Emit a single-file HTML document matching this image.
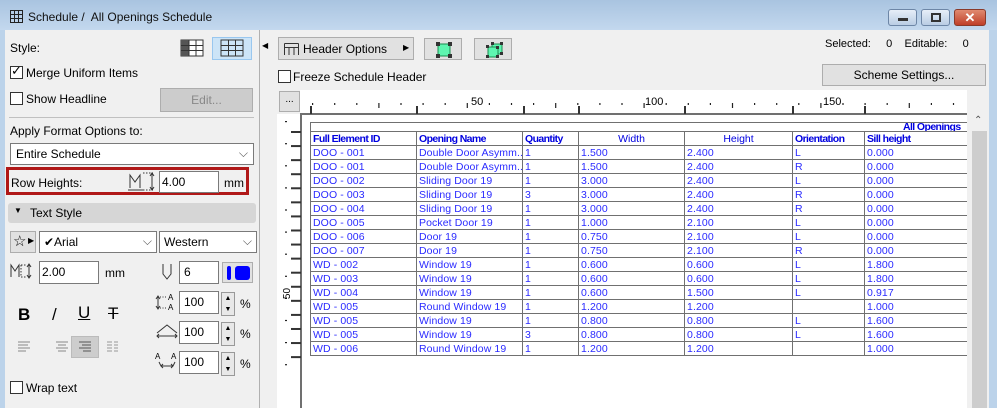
<!DOCTYPE html>
<html><head><meta charset="utf-8"><style>
*{margin:0;padding:0;box-sizing:border-box}
body{width:997px;height:408px;overflow:hidden;background:#bcd3ea;font-family:"Liberation Sans",sans-serif;font-size:12px;color:#000;position:relative}
.a{position:absolute}
.box{position:absolute;background:#fff;border:1px solid #7a7a7a}
.btn{position:absolute;background:#e1e1e1;border:1px solid #adadad}
.cb{position:absolute;width:13px;height:13px;border:1px solid #333;background:#fff}
.t{position:absolute;white-space:nowrap}
table{border-collapse:collapse;font-size:10.5px;color:#2a2aff;letter-spacing:0.1px}
td{border:1px solid #707070;height:14px;padding:0 2px;line-height:12px;white-space:nowrap;overflow:hidden}
tr.h td{font-weight:bold;letter-spacing:-0.6px;color:#0000e0}
.sp{position:absolute;width:14px;height:24px;border:1px solid #999;background:#e8e8e8;font-size:7px;text-align:center;line-height:11px}
</style></head><body>
<div class="a" style="left:0;top:0;width:997px;height:30px;background:linear-gradient(#a9c4e0,#c3d8ee)"></div>
<svg class="a" style="left:10px;top:10px" width="13" height="13"><rect x="0.5" y="0.5" width="12" height="12" fill="none" stroke="#222"/><path d="M0 4.5H13M0 8.5H13M4.5 0V13M8.5 0V13" stroke="#222"/></svg>
<div class="t" style="left:28px;top:10px;font-size:12px;color:#111">Schedule /&nbsp; All Openings Schedule</div>
<div class="a" style="left:888px;top:9px;width:29px;height:17px;border:1px solid #6d86a6;border-radius:3px;background:linear-gradient(#e6eef8,#b9cde4)"><div class="a" style="left:9px;top:8px;width:10px;height:3px;background:#333"></div></div>
<div class="a" style="left:921px;top:9px;width:29px;height:17px;border:1px solid #6d86a6;border-radius:3px;background:linear-gradient(#e6eef8,#b9cde4)"><div class="a" style="left:9px;top:3px;width:10px;height:9px;border:2px solid #333"></div></div>
<div class="a" style="left:954px;top:9px;width:32px;height:17px;border:1px solid #8a3a2a;border-radius:3px;background:linear-gradient(#e08a70,#c0402a);color:#fff;font-weight:bold;text-align:center;line-height:15px;font-size:13px">✕</div>

<div class="a" style="left:5px;top:30px;width:254px;height:378px;background:#f0f0f0"></div>
<div class="a" style="left:259px;top:30px;width:1px;height:378px;background:#b0b0b0"></div>
<div class="a" style="left:260px;top:30px;width:729px;height:378px;background:#f0f0f0"></div>
<div class="t" style="left:10px;top:41px">Style:</div>
<svg class="a" style="left:180px;top:39px" width="24" height="18"><rect x="1" y="1" width="22" height="16" fill="#fff" stroke="#333"/><rect x="1" y="1" width="8" height="16" fill="#555"/><path d="M1 6.5H23M1 11.5H23M9 1V17M16 1V17" stroke="#333"/></svg>
<div class="a" style="left:212px;top:37px;width:40px;height:23px;background:#cce4f7;border:1px solid #99c7ef"></div>
<svg class="a" style="left:220px;top:39px" width="24" height="18"><rect x="1" y="1" width="22" height="16" fill="none" stroke="#333"/><path d="M1 6.5H23M1 11.5H23M8.5 1V17M15.5 1V17" stroke="#333"/></svg>
<div class="cb" style="left:10px;top:66px"></div><div class="t" style="left:11px;top:63px;font-size:13px">✓</div>
<div class="t" style="left:26px;top:66px">Merge Uniform Items</div>
<div class="cb" style="left:10px;top:92px"></div>
<div class="t" style="left:26px;top:92px">Show Headline</div>
<div class="btn" style="left:160px;top:88px;width:93px;height:24px;background:#ccc;color:#888;text-align:center;line-height:22px">Edit...</div>
<div class="a" style="left:9px;top:117px;width:245px;height:1px;background:#c0c0c0"></div>
<div class="t" style="left:10px;top:124px">Apply Format Options to:</div>
<div class="box" style="left:10px;top:143px;width:244px;height:22px"><span class="t" style="left:5px;top:3px">Entire Schedule</span><span class="t" style="right:5px;top:2px;color:#555">⌵</span></div>
<div class="a" style="left:6px;top:167px;width:243px;height:28px;border:3px solid #b01818"></div>
<div class="t" style="left:11px;top:176px">Row Heights:</div>
<svg class="a" style="left:128px;top:172px" width="30" height="20"><path d="M2 16V3L7 10L12 3V16M0 18H16" stroke="#333" fill="none"/><path d="M15 1H25M15 18H25" stroke="#333" stroke-dasharray="1.5 1.5"/><path d="M24 2V17M22 4L24 1L26 4M22 15L24 18L26 15" stroke="#333" fill="none"/></svg>
<div class="box" style="left:159px;top:171px;width:60px;height:22px"><span class="t" style="left:2px;top:3px">4.00</span></div>
<div class="t" style="left:224px;top:176px">mm</div>
<div class="a" style="left:8px;top:203px;width:248px;height:20px;background:#d6d6d6;border-radius:3px"></div>
<div class="t" style="left:14px;top:206px;font-size:8px">▼</div>
<div class="t" style="left:30px;top:206px">Text Style</div>
<div class="btn" style="left:10px;top:231px;width:26px;height:22px"><span class="t" style="left:2px;top:0px;font-size:15px">☆</span><span class="t" style="left:17px;top:4px;font-size:8px">▶</span></div>
<div class="box" style="left:39px;top:231px;width:118px;height:22px"><span class="t" style="left:4px;top:3px">✔Arial</span><span class="t" style="right:4px;top:2px;color:#555">⌵</span></div>
<div class="box" style="left:159px;top:231px;width:98px;height:22px"><span class="t" style="left:4px;top:3px">Western</span><span class="t" style="right:4px;top:2px;color:#555">⌵</span></div>
<svg class="a" style="left:10px;top:263px" width="24" height="16"><path d="M1 14V2L5 8L9 2V14" stroke="#333" fill="none"/><path d="M11 2H17M11 14H17M11 2V14" stroke="#333" stroke-dasharray="1.5 1.5" fill="none"/><path d="M19 2V14M17 4L19 1L21 4M17 12L19 15L21 12" stroke="#333" fill="none"/></svg>
<div class="box" style="left:39px;top:261px;width:60px;height:23px"><span class="t" style="left:2px;top:3px">2.00</span></div>
<div class="t" style="left:105px;top:266px">mm</div>
<svg class="a" style="left:161px;top:263px" width="12" height="18"><path d="M2 1V11L6 16L10 11V1" stroke="#333" fill="none"/></svg>
<div class="box" style="left:179px;top:261px;width:40px;height:23px"><span class="t" style="left:4px;top:3px">6</span></div>
<div class="btn" style="left:222px;top:262px;width:31px;height:21px"><div class="a" style="left:4px;top:3px;width:4px;height:14px;background:#0000ff;border-radius:2px"></div><div class="a" style="left:12px;top:3px;width:15px;height:14px;background:#0000ff;border-radius:3px"></div></div>
<div class="t" style="left:18px;top:305px;font-size:17px;font-weight:bold">B</div>
<div class="t" style="left:52px;top:305px;font-size:17px">/</div>
<div class="t" style="left:78px;top:303px;font-size:17px;text-decoration:underline">U</div>
<div class="t" style="left:108px;top:304px;font-size:17px;text-decoration:line-through">T</div>
<svg class="a" style="left:16px;top:340px" width="110" height="14"><g stroke="#888"><path d="M2 2H14M2 5H12M2 8H14M2 11H10"/><path d="M40 2H52M42 5H50M40 8H52M42 11H50"/></g></svg>
<div class="a" style="left:71px;top:336px;width:28px;height:22px;background:#cdcdcd;border:1px solid #bbb"></div>
<svg class="a" style="left:78px;top:340px" width="40" height="14"><g stroke="#555"><path d="M1 2H13M4 5H13M1 8H13M5 11H13"/></g><g stroke="#999"><path d="M29 2H34M29 5H34M29 8H34M29 11H34M36 2H40M36 5H40M36 8H40M36 11H40"/></g></svg>
<svg class="a" style="left:155px;top:292px" width="24" height="20"><text x="13" y="8" font-size="8" font-family="Liberation Sans">A</text><text x="13" y="18" font-size="8" font-family="Liberation Sans">A</text><path d="M3 5V16M1 7L3 4L5 7M1 14L3 17L5 14" stroke="#333" fill="none"/><path d="M5 5H12M5 16H12" stroke="#333" stroke-dasharray="1 1.5"/></svg>
<div class="box" style="left:179px;top:291px;width:40px;height:23px"><span class="t" style="left:4px;top:3px">100</span></div>
<div class="sp" style="left:221px;top:292px">▲<br>▼</div><div class="t" style="left:240px;top:297px">%</div>
<svg class="a" style="left:156px;top:323px" width="22" height="16"><path d="M1 10L11 2L21 10M1 13H21M3 11L1 13L3 15M19 11L21 13L19 15" stroke="#333" fill="none"/></svg>
<div class="box" style="left:179px;top:321px;width:40px;height:23px"><span class="t" style="left:4px;top:3px">100</span></div>
<div class="sp" style="left:221px;top:322px">▲<br>▼</div><div class="t" style="left:240px;top:327px">%</div>
<svg class="a" style="left:155px;top:351px" width="24" height="20"><text x="0" y="8" font-size="8" font-family="Liberation Sans">A</text><text x="16" y="8" font-size="8" font-family="Liberation Sans">A</text><path d="M4 11L6 15H18L20 11M6 15L8 13M6 15L8 17M18 15L16 13M18 15L16 17" stroke="#333" fill="none"/></svg>
<div class="box" style="left:179px;top:351px;width:40px;height:23px"><span class="t" style="left:4px;top:3px">100</span></div>
<div class="sp" style="left:221px;top:352px">▲<br>▼</div><div class="t" style="left:240px;top:357px">%</div>
<div class="cb" style="left:10px;top:381px"></div>
<div class="t" style="left:26px;top:381px">Wrap text</div>

<div class="t" style="left:262px;top:41px;font-size:8px">◀</div>
<div class="btn" style="left:278px;top:37px;width:136px;height:23px"><svg class="a" style="left:5px;top:5px" width="15" height="12"><path d="M0.5 0.5H14.5M0.5 4.5H14.5M0.5 0.5V12M14.5 0.5V12M5 4.5V12M10 4.5V12" stroke="#333" fill="none"/></svg><span class="t" style="left:24px;top:4px">Header Options</span><span class="t" style="left:124px;top:5px;font-size:8px">▶</span></div>
<div class="btn" style="left:424px;top:38px;width:38px;height:22px"><svg class="a" style="left:11px;top:3px" width="16" height="16"><rect x="2" y="2" width="12" height="12" fill="#5ef5b0" stroke="#1a8a50"/><g fill="#333"><rect x="0" y="0" width="4" height="4"/><rect x="12" y="0" width="4" height="4"/><rect x="0" y="12" width="4" height="4"/><rect x="12" y="12" width="4" height="4"/></g></svg></div>
<div class="btn" style="left:474px;top:38px;width:38px;height:22px"><svg class="a" style="left:11px;top:3px" width="18" height="17"><rect x="6" y="2" width="10" height="10" fill="#5ef5b0" stroke="#1a8a50"/><rect x="2" y="5" width="10" height="10" fill="#5ef5b0" stroke="#1a8a50"/><g fill="#333"><rect x="0" y="3" width="3" height="3"/><rect x="5" y="0" width="3" height="3"/><rect x="14" y="0" width="3" height="3"/><rect x="10" y="4" width="3" height="3"/><rect x="0" y="13" width="3" height="3"/><rect x="10" y="13" width="3" height="3"/><rect x="14" y="10" width="3" height="3"/></g></svg></div>
<div class="t" style="left:825px;top:38px;font-size:11px">Selected:&nbsp;&nbsp;&nbsp;&nbsp;&nbsp;0&nbsp;&nbsp;&nbsp;&nbsp;Editable:&nbsp;&nbsp;&nbsp;&nbsp;&nbsp;0</div>
<div class="btn" style="left:822px;top:64px;width:164px;height:22px;text-align:center;line-height:20px">Scheme Settings...</div>
<div class="cb" style="left:278px;top:70px"></div>
<div class="t" style="left:293px;top:70px">Freeze Schedule Header</div>

<div class="btn" style="left:279px;top:91px;width:21px;height:21px;text-align:center;font-size:10px;line-height:16px">...</div>
<div class="a" style="left:300px;top:90px;width:667px;height:24px;background:#fff"></div>
<div class="a" style="left:277px;top:114px;width:690px;height:294px;background:#fff"></div>
<div class="a" style="left:300px;top:113px;width:667px;height:2px;background:#707070"></div>
<div class="a" style="left:300px;top:113px;width:2px;height:295px;background:#707070"></div>
<svg class="a" style="left:300px;top:90px" width="667" height="24" id="rl"></svg>
<div class="t" style="left:471px;top:96px;font-size:11px">50</div>
<div class="t" style="left:645px;top:96px;font-size:11px">100</div>
<div class="t" style="left:823px;top:96px;font-size:11px">150</div>
<svg class="a" style="left:277px;top:114px" width="24" height="294" id="vr"></svg>
<div class="t" style="left:282px;top:288px;font-size:10px;transform:rotate(-90deg)">50</div>
<div class="a" style="left:310px;top:122px;width:657px;height:236px;overflow:hidden">
<table style="width:680px;table-layout:fixed">
<col style="width:106px"><col style="width:106px"><col style="width:56px"><col style="width:106px"><col style="width:108px"><col style="width:72px"><col style="width:126px">
<tr class="h"><td colspan="7" style="padding-left:592px;height:9px;line-height:8px;font-size:10.5px;border-bottom:1px solid #707070">All Openings</td></tr>
<tr class="h"><td>Full Element ID</td><td>Opening Name</td><td>Quantity</td><td style="text-align:center;font-weight:normal;letter-spacing:0">Width</td><td style="text-align:center;font-weight:normal;letter-spacing:0">Height</td><td>Orientation</td><td>Sill height</td></tr>
<tr><td>DOO - 001</td><td>Double Door Asymm...</td><td>1</td><td>1.500</td><td>2.400</td><td>L</td><td>0.000</td></tr>
<tr><td>DOO - 001</td><td>Double Door Asymm...</td><td>1</td><td>1.500</td><td>2.400</td><td>R</td><td>0.000</td></tr>
<tr><td>DOO - 002</td><td>Sliding Door 19</td><td>1</td><td>3.000</td><td>2.400</td><td>L</td><td>0.000</td></tr>
<tr><td>DOO - 003</td><td>Sliding Door 19</td><td>3</td><td>3.000</td><td>2.400</td><td>R</td><td>0.000</td></tr>
<tr><td>DOO - 004</td><td>Sliding Door 19</td><td>1</td><td>3.000</td><td>2.400</td><td>R</td><td>0.000</td></tr>
<tr><td>DOO - 005</td><td>Pocket Door 19</td><td>1</td><td>1.000</td><td>2.100</td><td>L</td><td>0.000</td></tr>
<tr><td>DOO - 006</td><td>Door 19</td><td>1</td><td>0.750</td><td>2.100</td><td>L</td><td>0.000</td></tr>
<tr><td>DOO - 007</td><td>Door 19</td><td>1</td><td>0.750</td><td>2.100</td><td>R</td><td>0.000</td></tr>
<tr><td>WD - 002</td><td>Window 19</td><td>1</td><td>0.600</td><td>0.600</td><td>L</td><td>1.800</td></tr>
<tr><td>WD - 003</td><td>Window 19</td><td>1</td><td>0.600</td><td>0.600</td><td>L</td><td>1.800</td></tr>
<tr><td>WD - 004</td><td>Window 19</td><td>1</td><td>0.600</td><td>1.500</td><td>L</td><td>0.917</td></tr>
<tr><td>WD - 005</td><td>Round Window 19</td><td>1</td><td>1.200</td><td>1.200</td><td></td><td>1.000</td></tr>
<tr><td>WD - 005</td><td>Window 19</td><td>1</td><td>0.800</td><td>0.800</td><td>L</td><td>1.600</td></tr>
<tr><td>WD - 005</td><td>Window 19</td><td>3</td><td>0.800</td><td>0.800</td><td>L</td><td>1.600</td></tr>
<tr><td>WD - 006</td><td>Round Window 19</td><td>1</td><td>1.200</td><td>1.200</td><td></td><td>1.000</td></tr>
</table></div>
<div class="a" style="left:967px;top:90px;width:22px;height:318px;background:#f0f0f0"></div>
<div class="a" style="left:972px;top:131px;width:15px;height:277px;background:#cdcdcd"></div>
<div class="t" style="left:974px;top:115px;font-size:10px;color:#555">⌃</div>
<script>
var r=document.getElementById('rl'),s='';
for(var i=0;i<31;i++){var x=12+i*22.1;s+='<rect x="'+x+'" y="13" width="1.2" height="'+(i%4==3?5:2)+'" fill="#222"/>';}
[10,116,223,278,384,492,564,668].forEach(function(x){s+='<rect x="'+x+'" y="16" width="2" height="8" fill="#333"/>';});
r.innerHTML=s;
var v=document.getElementById('vr'),t='';
for(var k=0;k<17;k++){var y=17+k*14.07;t+='<rect x="14" y="'+y+'" width="10" height="2" fill="#333"/>';}
for(var k=0;k<12;k++){var y=7+k*22.1;t+='<rect x="8" y="'+y+'" width="2" height="1.2" fill="#222"/>';}
v.innerHTML=t;
</script>
</body></html>
